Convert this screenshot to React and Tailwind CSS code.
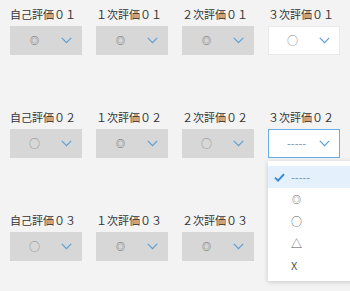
import React from 'react';

const rows = [
  [
    { label: '自己評価０１', value: '◎', disabled: true },
    { label: '１次評価０１', value: '◎', disabled: true },
    { label: '２次評価０１', value: '◎', disabled: true },
    { label: '３次評価０１', value: '○' },
  ],
  [
    { label: '自己評価０２', value: '○', disabled: true },
    { label: '１次評価０２', value: '◎', disabled: true },
    { label: '２次評価０２', value: '○', disabled: true },
    { label: '３次評価０２', value: '-----', open: true },
  ],
  [
    { label: '自己評価０３', value: '○', disabled: true },
    { label: '１次評価０３', value: '◎', disabled: true },
    { label: '２次評価０３', value: '◎', disabled: true },
  ],
];

const options = ['-----', '◎', '○', '△', 'X'];

const Chevron = () => (
  <svg width="11" height="7" viewBox="0 0 11 7" fill="none">
    <path d="M0.8 0.8L5.5 5.6L10.2 0.8" stroke="#5b9fd6" strokeWidth="1.2" />
  </svg>
);

// the double circle is drawn smaller than the plain circle in the source UI
const Value = ({ v, className = '' }) => (
  <span
    className={`flex items-center h-[14px] leading-none ${
      v === '◎' ? 'text-[9px] font-bold pl-[1px] text-[#6f6f6f]' : 'text-[11px]'
    } ${className}`}
  >
    {v}
  </span>
);

const Select = ({ value, disabled, open }) => {
  const box = disabled
    ? 'bg-[#d7d7d7] border-[#d7d7d7] text-[#8a8a8a]'
    : open
    ? 'bg-white border-[#68aee6] text-[#6b8fb5]'
    : 'bg-white border-[#e6e9ec] text-[#7d8894]';
  return (
    <div className="relative">
      <div className={`h-[29px] border flex items-center pl-[18px] pr-[9px] ${box}`}>
        <div className="flex-1">
          <Value v={value} />
        </div>
        <Chevron />
      </div>
      {open && (
        <div className="absolute left-0 top-[32px] w-[100px] bg-white shadow-[0_1px_5px_rgba(0,0,0,0.18)] py-[5px] z-10">
          {options.map((o, i) => (
            <div
              key={o}
              className={`h-[22px] flex items-center ${i === 0 ? 'bg-[#e4f1fc]' : ''}`}
            >
              <div className="w-[19px] flex justify-end pr-[2px]">
                {i === 0 && (
                  <svg width="11" height="9" viewBox="0 0 11 9">
                    <path d="M1 4.6L4 7.6L10 1.2" stroke="#3f8ad0" strokeWidth="2" fill="none" />
                  </svg>
                )}
              </div>
              <div className="pl-[4px] text-[#555]">
                <Value v={o} className={i === 0 ? 'text-[#6b8fb5]' : ''} />
              </div>
            </div>
          ))}
        </div>
      )}
    </div>
  );
};

export default function App() {
  return (
    <div
      className="w-[350px] h-[291px] bg-[#f3f3f3] overflow-hidden px-[10px] pt-[5px]"
      style={{ fontFamily: '"Noto Sans CJK JP", "Noto Sans", sans-serif' }}
    >
      <div className="flex flex-col gap-[53px]">
        {rows.map((row, r) => (
          <div key={r} className="grid grid-cols-[72px_72px_72px_72px] gap-x-[14px]">
            {row.map((c) => (
              <div key={c.label}>
                <div className="text-[11px] leading-[18px] text-[#333] mb-[3px]">{c.label}</div>
                <Select value={c.value} disabled={c.disabled} open={c.open} />
              </div>
            ))}
          </div>
        ))}
      </div>
    </div>
  );
}
